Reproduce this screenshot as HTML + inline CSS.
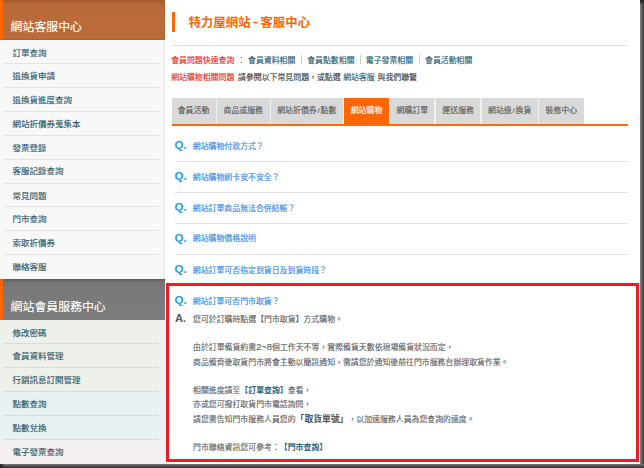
<!DOCTYPE html>
<html lang="zh-Hant">
<head>
<meta charset="utf-8">
<title>特力屋網站-客服中心</title>
<style>
html,body{margin:0;padding:0;}
body{width:644px;height:468px;overflow:hidden;background:#fff;position:relative;
  font-family:"Liberation Sans","Noto Sans CJK TC",sans-serif;font-size:7.9px;color:#555;-webkit-text-stroke:0.12px;text-spacing-trim:space-all;}
*{box-sizing:border-box;}
.abs{position:absolute;white-space:nowrap;}
/* ---------- sidebar ---------- */
#side{position:absolute;left:0;top:0;width:164.5px;height:464px;background:#f8f8f8;border-right:1px solid #e6e6e6;}
.shead{position:absolute;left:0;width:164.5px;color:#fff;font-size:11.9px;border-left:3px solid #ff6600;}
.shead span{position:absolute;left:7.6px;white-space:nowrap;line-height:14px;}
#sh1{top:0;height:39.5px;background:linear-gradient(#9e592c 0,#b46635 3px,#b96a38 8px,#bc6c3a 100%);border-right:1px solid #ad6433;border-bottom:1px solid #a86235;}
#sh1 span{top:20.4px;}
#sh2{top:278.5px;height:41.5px;background:linear-gradient(#5a5a5a 0,#737373 3px,#797979 8px,#7c7c7c 100%);}
#sh2 span{top:21.6px;}
.ml{position:absolute;left:3.5px;width:155.5px;height:1px;background:rgba(0,0,0,.085);}
.mt{position:absolute;left:12.4px;line-height:11px;font-size:8.5px;color:#295464;white-space:nowrap;}
.bgb{position:absolute;left:0;width:164.5px;}
.g{background:#eef1ea;} .b{background:#e9f2f3;} .p{background:#f5f0f0;}
/* ---------- main ---------- */
#tbar{position:absolute;left:171.5px;top:12px;width:3.5px;height:19.5px;background:#ff6600;}
#title{left:188.4px;top:14.4px;line-height:18px;font-size:12.4px;font-weight:bold;color:#ff6600;letter-spacing:.05px;-webkit-text-stroke:0;}
#title span{font-size:19px;font-weight:normal;line-height:0;letter-spacing:0;padding:0 1.8px 0 1.6px;position:relative;top:.8px;}
.hr{position:absolute;left:171.5px;width:456.5px;height:1px;background:#e2e2e2;}
.red{color:#e62a14;} .teal{color:#27596d;} .dk{color:#3a3a3a;}
.sep{position:absolute;top:54.6px;width:1px;height:9.6px;background:#cfcfcf;}
.l1{top:54.6px;line-height:12px;}
.l2{top:72.1px;line-height:12px;}
.tab{position:absolute;top:98px;height:26px;background:#d9d9d9;color:#585858;text-align:center;line-height:25px;white-space:nowrap;}
.tab.on{background:#ff6600;color:#fff;}
.sl{padding:0 .8px;}
#oline{position:absolute;left:171.5px;top:123.8px;width:456.5px;height:2px;background:#ff6a10;}
.q{left:174.6px;font-size:11.4px;font-weight:bold;color:#1f9fe8;-webkit-text-stroke:0.1px;line-height:14px;}
.qt{left:192.8px;color:#2f86ea;line-height:12px;}
.a{left:174.9px;font-size:11.2px;font-weight:bold;color:#585858;-webkit-text-stroke:0;line-height:14px;}
.at{left:193px;color:#5a5a5a;-webkit-text-stroke:0.1px;line-height:12px;}
.at b{color:#505050;-webkit-text-stroke:0;} .at b.teal{color:#26627a;}
#box{position:absolute;left:165.6px;top:282.5px;width:473.5px;height:179.4px;border:3.4px solid #ed1c24;border-bottom-width:3.6px;border-top-width:3.5px;}
/* ---------- frame shadow ---------- */
#shr{position:absolute;left:639.7px;top:0;width:4.3px;height:468px;background:linear-gradient(90deg,#858585,#363636);}
#shb{position:absolute;left:0;top:463.6px;width:644px;height:4.4px;background:linear-gradient(#787878,#2c2c2c);}
</style>
</head>
<body>

<div id="side">
  <div class="shead" id="sh1"><span>網站客服中心</span></div>
  <span class="mt" style="top:47.7px">訂單查詢</span>
  <i class="ml" style="top:63px"></i>
  <span class="mt" style="top:71.2px">退換貨申請</span>
  <i class="ml" style="top:87px"></i>
  <span class="mt" style="top:95.2px">退換貨進度查詢</span>
  <i class="ml" style="top:111px"></i>
  <span class="mt" style="top:119.0px">網站折價券蒐集本</span>
  <i class="ml" style="top:135px"></i>
  <span class="mt" style="top:142.7px">發票登錄</span>
  <i class="ml" style="top:159px"></i>
  <span class="mt" style="top:166.4px">客服記錄查詢</span>
  <i class="ml" style="top:183px"></i>
  <span class="mt" style="top:190.7px">常見問題</span>
  <i class="ml" style="top:206px"></i>
  <span class="mt" style="top:213.9px">門市查詢</span>
  <i class="ml" style="top:230px"></i>
  <span class="mt" style="top:237.7px">索取折價券</span>
  <i class="ml" style="top:254px"></i>
  <span class="mt" style="top:261.7px">聯絡客服</span>
  <div class="shead" id="sh2"><span>網站會員服務中心</span></div>
  <div class="bgb g" style="top:320px;height:71px"></div>
  <div class="bgb b" style="top:391px;height:49px"></div>
  <div class="bgb p" style="top:440px;height:25px"></div>
  <span class="mt" style="top:327.7px">修改密碼</span>
  <i class="ml" style="top:343px"></i>
  <span class="mt" style="top:350.9px">會員資料管理</span>
  <i class="ml" style="top:367px"></i>
  <span class="mt" style="top:374.9px">行銷訊息訂閱管理</span>
  <i class="ml" style="top:391px"></i>
  <span class="mt" style="top:398.7px">點數查詢</span>
  <i class="ml" style="top:415px"></i>
  <span class="mt" style="top:422.9px">點數兌換</span>
  <i class="ml" style="top:439px"></i>
  <span class="mt" style="top:446.7px">電子發票查詢</span>
</div>

<div id="tbar"></div>
<div class="abs" id="title">特力屋網站<span>-</span>客服中心</div>
<div class="hr" style="top:45px"></div>

<div class="abs l1 red" style="left:171.2px">會員問題快速查詢</div>
<div class="abs l1 red" style="left:237.4px">：</div>
<div class="abs l1 teal" style="left:248px">會員資料相關</div>
<div class="sep" style="left:300.8px"></div>
<div class="abs l1 teal" style="left:307.2px">會員點數相關</div>
<div class="sep" style="left:360.1px"></div>
<div class="abs l1 teal" style="left:365.8px">電子發票相關</div>
<div class="sep" style="left:418.8px"></div>
<div class="abs l1 teal" style="left:425px">會員活動相關</div>

<div class="abs l2 red" style="left:171.2px">網站購物相關問題</div>
<div class="abs l2 dk" style="left:238px">請參閱以下常見問題，或點選</div>
<div class="abs l2 teal" style="left:343.2px">網站客服</div>
<div class="abs l2 dk" style="left:377.5px">與我們聯繫</div>

<div style="position:absolute;left:171.5px;top:98px;width:412.3px;height:26px;background:#f0f0f0"></div>
<div class="tab" style="left:171.5px;width:44px">會員活動</div>
<div class="tab" style="left:217px;width:52.5px">商品或服務</div>
<div class="tab" style="left:271px;width:71.5px">網站折價券<span class="sl">/</span>點數</div>
<div class="tab on" style="left:344px;width:45px">網站購物</div>
<div class="tab" style="left:390.3px;width:44.2px">網購訂單</div>
<div class="tab" style="left:436px;width:44.3px">運送服務</div>
<div class="tab" style="left:481.7px;width:56px">網站退<span class="sl">/</span>換貨</div>
<div class="tab" style="left:539px;width:44.8px">裝修中心</div>
<div id="oline"></div>

<div class="abs q" style="top:138.0px">Q.</div><div class="abs qt" style="top:140.6px">網站購物付款方式？</div>
<div class="hr" style="left:175px;width:453px;top:160.8px"></div>
<div class="abs q" style="top:169.4px">Q.</div><div class="abs qt" style="top:172.1px">網站購物刷卡安不安全？</div>
<div class="hr" style="left:175px;width:453px;top:191.7px"></div>
<div class="abs q" style="top:200.1px">Q.</div><div class="abs qt" style="top:202.8px">網站訂單商品無法合併結帳？</div>
<div class="hr" style="left:175px;width:453px;top:222.6px"></div>
<div class="abs q" style="top:230.8px">Q.</div><div class="abs qt" style="top:233.0px">網站購物價格說明</div>
<div class="hr" style="left:175px;width:453px;top:253.5px"></div>
<div class="abs q" style="top:262.4px">Q.</div><div class="abs qt" style="top:264.6px">網站訂單可否指定到貨日及到貨時段？</div>

<div id="box"></div>
<div class="abs q" style="top:293.0px">Q.</div><div class="abs qt" style="top:295.5px">網站訂單可否門市取貨？</div>
<div class="abs a" style="top:310.8px">A.</div>
<div class="abs at" style="top:313.8px">您可於訂購時點選【門市取貨】方式購物。</div>
<div class="abs at" style="top:341.7px">由於訂單備貨約需<span style="font-size:9.4px;line-height:0">2~8</span>個工作天不等，實際備貨天數依現場備貨狀況而定，</div>
<div class="abs at" style="top:357.0px">商品備齊後取貨門市將會主動以簡訊通知，需請您於通知後前往門市服務台辦理取貨作業。</div>
<div class="abs at" style="top:384.8px">相關進度請至<b class="teal">【訂單查詢】</b>查看，</div>
<div class="abs at" style="top:399.2px">亦或您可撥打取貨門市電話詢問，</div>
<div class="abs at" style="top:413.5px">請您需告知門市服務人員您的<b style="font-size:8.8px;line-height:0">「取貨單號」</b>，以加速服務人員為您查詢的速度。</div>
<div class="abs at" style="top:442.2px">門市聯絡資訊您可參考：<b class="teal">【門市查詢】</b></div>

<div id="shr"></div>
<div id="shb"></div>
<div style="position:absolute;left:639.7px;top:0;width:4.3px;height:5px;background:linear-gradient(rgba(30,30,30,.85) 0,rgba(30,30,30,.7) 40%,rgba(30,30,30,0) 100%)"></div>
<div style="position:absolute;left:0;top:463.6px;width:5px;height:4.4px;background:linear-gradient(90deg,rgba(25,25,25,.8) 0,rgba(25,25,25,.5) 50%,rgba(25,25,25,0) 100%)"></div>
</body>
</html>
